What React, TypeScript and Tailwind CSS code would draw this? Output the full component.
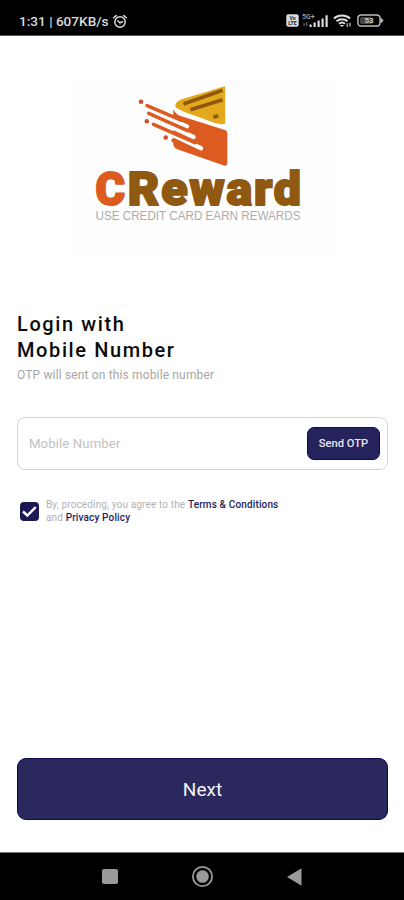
import React, { useState } from "react";

function StatusBar() {
    return (
        <div className="flex h-[36px] items-center justify-between border-b border-[#555] bg-black pl-[19px] pr-[20px] pt-[6px] text-[#dcdcdc]">
            <div className="flex items-center pt-[2px]">
                <span className="w-[93px] whitespace-nowrap text-[13.6px] font-medium leading-none">1:31 | 607KB/s</span>
                <svg width="16" height="16" viewBox="0 0 16 16" fill="none" stroke="currentColor" strokeWidth="1.5" strokeLinecap="round">
                    <circle cx="8" cy="8" r="5.2" />
                    <path d="M1.6 3.8 4.2 1.6M14.4 3.8 11.8 1.6M5.8 7 8 8.8l2.4-1" />
                </svg>
            </div>
            <div className="flex items-center">
                <svg width="13" height="13" viewBox="0 0 13 13">
                    <rect x="0.3" y="0.3" width="12.4" height="12.4" rx="2" fill="#dcdcdc" />
                    <text x="6.5" y="5.7" fontSize="5" fontWeight="700" textAnchor="middle" fill="#222">Vo</text>
                    <text x="6.5" y="11.3" fontSize="5.2" fontWeight="700" textAnchor="middle" fill="#222">LTE</text>
                </svg>
                <svg className="ml-[3px]" width="27" height="16" viewBox="0 0 27 16" fill="#dcdcdc">
                    <text x="0" y="5.5" fontSize="7" fontWeight="500" fill="#aaa">5G+</text>
                    <path d="M1.5 10h1.2v3H1.5zM4 9h1.2v4H4z" fill="#666" />
                    <path d="M7.5 11.4h2.2V14H7.5zM11.5 9.6h2.2V14h-2.2zM15.5 7.6h2.2V14h-2.2zM19.5 5.4h2.2V14h-2.2zM23.5 2.2h2.2V14h-2.2z" />
                </svg>
                <svg className="ml-[4px]" width="20" height="15" viewBox="0 0 20 15" fill="none" stroke="#dcdcdc" strokeWidth="2">
                    <path d="M.9 5.4a12.4 12.4 0 0 1 16.2 0M3.5 8.2a8.4 8.4 0 0 1 11 0M6 10.8a4.5 4.5 0 0 1 6 0" />
                    <path d="m6.8 12 2.2 2 2.2-2z" fill="#dcdcdc" stroke="none" />
                    <path d="M14.3 14v-3.8M17 9.8v3.6" stroke="#999" strokeWidth="1.6" />
                </svg>
                <svg className="ml-[4px]" width="27" height="13" viewBox="0 0 27 13">
                    <rect x="0.9" y="0.9" width="22.2" height="11.2" rx="3.4" fill="none" stroke="#bdbdbd" strokeWidth="1.5" />
                    <rect x="3" y="3" width="12" height="7" rx="1.4" fill="#444" />
                    <path d="M23.8 3.4 26.6 6.5 23.8 9.6z" fill="#bdbdbd" />
                    <text x="12" y="9.3" fontSize="8" fontWeight="700" textAnchor="middle" fill="#c8c8c8">53</text>
                </svg>
            </div>
        </div>
    );
}

function Logo() {
    return (
        <svg className="ml-[53px]" width="264" height="180" viewBox="70 80 264 180">
            <rect x="73" y="80" width="261" height="178" fill="#fefefe" />
            {/* wallet */}
            <path d="M225.2 87.5q0-1.4-1.4-1L181 99.5q-8.5 3.800-4.500 8.200Q180 110.500 193 115L214 122.800q7 2.200 11.200.8z" fill="#e3a91d" />
            <path d="M183.5 104 222.5 90.3M190.5 109.8 222.5 99.8M213.5 117.3l4.800-1.700" stroke="#92570f" strokeWidth="3.6" />
            <path
                d="M173.300 109.300q2.600 5 7.200 6.800l44.500 14q2.300.8 2.300 3.400v29.500q0 3.600-3.400 2.400L178 149.500q-4.700-1.500-4.700-6z"
                fill="#db5b21"
                stroke="#fefefe"
                strokeWidth="2"
                paintOrder="stroke"
            />
            {/* speed lines */}
            <g fill="none" strokeLinecap="round">
                <path d="M148 109.5 187 126.400M154 118.800 193.500 137M164 130.800 201 148.200" stroke="#fefefe" strokeWidth="4.4" />
                <path d="M147 105.6 181 120.2M148.7 113.3 188 130.8M153.5 124.300 195 142.700M173 140.400 200 152.600" stroke="#db5b21" strokeWidth="3.5" />
            </g>
            <g fill="#d94b2b">
                <circle cx="141" cy="101.8" r="2.3" />
                <circle cx="146.8" cy="121.3" r="2.3" />
                <circle cx="165.7" cy="137.6" r="2.3" />
            </g>
            <g fontFamily="Roboto, sans-serif" fontSize="46.5" fontWeight="900" strokeWidth="2" strokeLinejoin="round">
                <text x="95.5" y="205.3" textLength="29.5" lengthAdjust="spacingAndGlyphs" fill="#db5b21" stroke="#db5b21">C</text>
                <text x="127.8" y="205.3" textLength="175" letterSpacing="1.8" lengthAdjust="spacingAndGlyphs" fill="#905911" stroke="#905911">Reward</text>
            </g>
            <text x="95.5" y="220.3" fontFamily="'Liberation Sans', sans-serif" fontSize="12" textLength="205" lengthAdjust="spacingAndGlyphs" fill="#adadad">USE CREDIT CARD EARN REWARDS</text>
        </svg>
    );
}

function NavigationBar() {
    return (
        <div className="flex h-[48px] items-center border-t border-[#777] bg-black pl-[102px]">
            <div className="h-[15px] w-[16px] rounded-[2px] bg-[#9a9a9a]" />
            <svg className="ml-[73px]" width="23" height="23" viewBox="0 0 23 23">
                <circle cx="11.5" cy="11.5" r="9.6" fill="none" stroke="#9a9a9a" strokeWidth="1.8" />
                <circle cx="11.5" cy="11.5" r="6.3" fill="#9a9a9a" />
            </svg>
            <svg className="ml-[73px]" width="15" height="18" viewBox="0 0 15 18">
                <path d="M0 9 14.5.2v17.6z" fill="#9a9a9a" />
            </svg>
        </div>
    );
}

export default function App() {
    const [mobile, setMobile] = useState("");
    const [accepted, setAccepted] = useState(true);

    return (
        <div className="flex h-[900px] w-[404px] flex-col bg-white font-['Roboto',sans-serif]">
            <StatusBar />

            <main className="flex flex-1 flex-col pl-[17px] pr-[16px] pt-[44px]">
                <Logo />

                <h1 className="mt-[51px] text-[20px] font-medium leading-[26px] tracking-[1.6px] text-[#0b0b0b]">
                    Login with
                    <br />
                    Mobile Number
                </h1>
                <p className="mt-[4px] text-[12px] leading-[16px] tracking-[0.15px] text-[#a6a6a6]">
                    OTP will sent on this mobile number
                </p>

                <div className="mt-[34px] flex h-[53px] items-center justify-between rounded-[8px] border border-[#d5d5d5] pl-[11px] pr-[7px]">
                    <input
                        className="w-[200px] text-[13.2px] tracking-[0.1px] outline-none placeholder:text-[#c2c2c2]"
                        placeholder="Mobile Number"
                        value={mobile}
                        onChange={(e) => setMobile(e.target.value)}
                    />
                    <button className="h-[33px] w-[73px] rounded-[7px] border border-[#100a50] bg-[#26235c] pt-[1px] text-[11.2px] font-medium text-[#e6e6f2]">
                        Send OTP
                    </button>
                </div>

                <div className="mt-[28px] flex items-start">
                    <button
                        className="ml-[3px] mt-[4px] flex h-[19px] w-[19px] items-center justify-center rounded-[4px] bg-[#1c1856]"
                        onClick={() => setAccepted(!accepted)}
                    >
                        {accepted && (
                            <svg width="15" height="13" viewBox="0 0 15 13" fill="none" stroke="#fff" strokeWidth="2.4">
                                <path d="M1 6.5 5.3 10.5 13.8 2" />
                            </svg>
                        )}
                    </button>
                    <p className="ml-[7px] mt-[1px] text-[10px] leading-[12.5px] tracking-[0.14px] text-[#b2b2b2]">
                        By, proceding, you agree to the{" "}
                        <span className="font-medium text-[#262357]">Terms &amp; Conditions</span>
                        <br />
                        and <span className="font-medium text-[#262357]">Privacy Policy</span>
                    </p>
                </div>

                <button className="mb-[32px] mt-auto h-[62px] rounded-[9px] border border-[#100a50] bg-[#2a285c] pt-[3px] text-[19px] text-[#f4f4fa]">
                    Next
                </button>
            </main>

            <NavigationBar />
        </div>
    );
}
